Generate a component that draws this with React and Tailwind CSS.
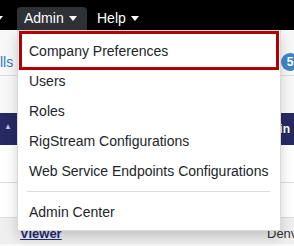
import React from "react";

const Caret = ({ className = "" }) => (
  <span className={`inline-block w-0 h-0 border-x-[4px] border-x-transparent border-t-[5px] border-t-white ${className}`} />
);

const menuItems = ["Users", "Roles", "RigStream Configurations", "Web Service Endpoints Configurations"];

export default function App() {
  return (
    <div
      className="relative w-[294px] h-[246px] overflow-hidden bg-[#f8f8f8] text-[14px]"
      style={{ fontFamily: '"Liberation Sans", Arial, sans-serif' }}
    >
      {/* top nav */}
      <div className="h-[30px] bg-black flex items-end">
        <div className="w-[3px] h-[23px] overflow-hidden flex items-center">
          <Caret className="ml-[-5px] shrink-0" />
        </div>
        <div className="ml-[14px] w-[70px] h-[23px] bg-[#2e3236] rounded-t-[4px] flex items-center pl-[7px] text-white">
          <span>Admin</span>
          <Caret className="ml-[5px]" />
        </div>
        <div className="ml-[10px] h-[23px] flex items-center text-white">
          <span>Help</span>
          <Caret className="ml-[5px]" />
        </div>
      </div>

      {/* page content behind the menu */}
      <div className="flex flex-col">
        <div className="h-[46px] border-b border-[#dddddd] flex items-center justify-between pt-[19px]">
          <span className="text-[#337ab7]">lls</span>
          <span className="w-[18px] h-[18px] rounded-full bg-[#3f86c8] text-white text-[12px] font-bold flex items-center justify-center mr-[-5px]">
            5
          </span>
        </div>
        <div className="h-[37px]" />
        <div className="h-[32px] bg-[#272a62] flex items-center justify-between">
          <span className="text-[#b9bde8] text-[8px] pl-[4px] mb-[5px]">▲</span>
          <span className="text-white font-bold text-[12px] pr-[4px]">Admin</span>
        </div>
        <div className="h-[38px] border-b border-[#dddddd] bg-white" />
        <div className="h-[35px] border-b border-[#dddddd] bg-white" />
        <div className="grid grid-cols-[267px_1fr] pt-[6px] bg-[#efefef] text-[13px]">
          <span className="pl-[20px]">
            <span className="text-[#1f2a7a] font-bold underline">Viewer</span>
          </span>
          <span className="text-[#333333] whitespace-nowrap">Denve</span>
        </div>
      </div>

      {/* dropdown menu */}
      <div className="absolute left-[17px] top-[30px] w-[264px] h-[201px] bg-white border border-black/15 shadow-[0_6px_12px_rgba(0,0,0,0.175)] pt-[5px] text-[#212529]">
        <div className="relative h-[30px] flex items-center pl-[11px]">
          <span className="absolute left-[1px] right-[1px] top-[-5px] bottom-[-4px] border-[3px] border-[#b20000]" />
          Company Preferences
        </div>
        {menuItems.map((item) => (
          <div key={item} className="h-[30px] flex items-center pl-[11px] whitespace-nowrap">
            {item}
          </div>
        ))}
        <div className="h-px bg-[#dddddd] ml-[9px] mr-[10px] my-[5px]" />
        <div className="h-[30px] flex items-center pl-[11px]">Admin Center</div>
      </div>
    </div>
  );
}
